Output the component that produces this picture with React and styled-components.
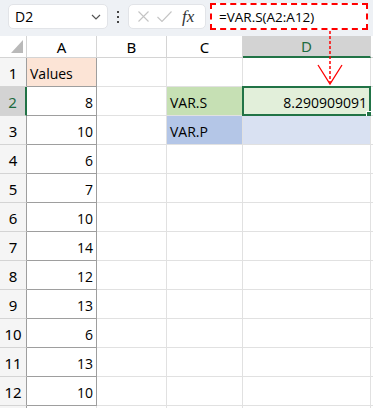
import styled, { createGlobalStyle } from "styled-components";

const GlobalStyle = createGlobalStyle`
  html, body {
    margin: 0;
    padding: 0;
    background: #ffffff;
    overflow: hidden;
  }
`;

const Page = styled.div`
  position: relative;
  width: 373px;
  height: 408px;
  overflow: hidden;
  font-family: "Open Sans", "Noto Sans", sans-serif;
  color: #000000;
`;

const FormulaBar = styled.div`
  display: flex;
  align-items: center;
  height: 36px;
  padding: 0 5px 3px 8px;
  box-sizing: border-box;
  background: #eef1f5;
`;

const NameBox = styled.div`
  display: flex;
  align-items: center;
  justify-content: space-between;
  width: 100px;
  height: 25px;
  box-sizing: border-box;
  padding: 0 6px 0 6px;
  background: #ffffff;
  border: 1px solid #e2e4e8;
  border-radius: 5px;
  font-size: 14px;
`;

const Dots = styled.div`
  display: flex;
  flex-direction: column;
  gap: 3px;
  margin: 0 9px 0 9px;
  span {
    width: 2px;
    height: 2px;
    background: #444444;
  }
`;

const FxBox = styled.div`
  display: flex;
  align-items: center;
  gap: 8px;
  width: 78px;
  height: 25px;
  box-sizing: border-box;
  padding: 0 6px 0 9px;
  background: #ffffff;
  border: 1px solid #e2e4e8;
  border-radius: 5px;
`;

const Fx = styled.span`
  font-family: "Liberation Serif", serif;
  font-style: italic;
  font-size: 17px;
  color: #333333;
  margin-left: 2px;
`;

const FormulaInput = styled.div`
  flex: 1;
  height: 27px;
  margin-left: 4px;
  box-sizing: border-box;
  padding-left: 7px;
  display: flex;
  align-items: center;
  background: #ffffff;
  border: 2px dashed #ff0000;
  font-size: 13.5px;
`;

const Sheet = styled.div`
  display: grid;
  grid-template-columns: 27px 70px 70px 76px 128px 1fr;
  grid-template-rows: 22px repeat(12, 29px) 2px;
  background: #ffffff;
`;

const Corner = styled.div`
  position: relative;
  border-right: 1px solid #d4d4d4;
  border-bottom: 1px solid #d4d4d4;
  background: #ffffff;
  &::after {
    content: "";
    position: absolute;
    right: 3px;
    bottom: 4px;
    width: 12px;
    height: 13px;
    background: #b9b9b9;
    clip-path: polygon(100% 0, 100% 100%, 0 100%);
  }
`;

const ColHeader = styled.div`
  display: flex;
  align-items: center;
  justify-content: center;
  font-family: "Noto Sans", sans-serif;
  font-size: 15px;
  box-sizing: border-box;
  background: ${(p) => (p.$active ? "#d3d3d3" : "#ffffff")};
  color: ${(p) => (p.$active ? "#1e6b40" : "#000000")};
  border-right: 1px solid #d4d4d4;
  border-bottom: ${(p) => (p.$active ? "2px solid #217346" : "1px solid #d4d4d4")};
`;

const RowHeader = styled.div`
  display: flex;
  align-items: flex-end;
  justify-content: center;
  padding-bottom: 3px;
  box-sizing: border-box;
  overflow: hidden;
  font-family: "Noto Sans", sans-serif;
  font-size: 15px;
  background: ${(p) => (p.$active ? "#d3d3d3" : "#f5f5f5")};
  color: ${(p) => (p.$active ? "#1e6b40" : "#000000")};
  border-bottom: 1px solid #d4d4d4;
  border-right: ${(p) => (p.$active ? "2px solid #217346" : "1px solid #9e9e9e")};
`;

const Cell = styled.div`
  position: relative;
  display: flex;
  align-items: flex-end;
  justify-content: ${(p) => (p.$num ? "flex-end" : "flex-start")};
  padding: 0 3px 3px 3px;
  box-sizing: border-box;
  font-size: 14px;
  white-space: nowrap;
  background: ${(p) => p.$bg || "#ffffff"};
  border-right: 1px solid ${(p) => (p.$boxed ? "#9e9e9e" : "#e1e1e1")};
  border-bottom: 1px solid ${(p) => (p.$boxed ? "#9e9e9e" : "#e1e1e1")};
  ${(p) =>
    p.$selected &&
    `
    &::before {
      content: "";
      position: absolute;
      left: -1px;
      top: -1px;
      right: -1px;
      bottom: -1px;
      border: 2px solid #217346;
      pointer-events: none;
    }
    &::after {
      content: "";
      position: absolute;
      right: -4px;
      bottom: -4px;
      width: 6px;
      height: 6px;
      background: #217346;
      border: 1px solid #ffffff;
    }
  `}
`;

const Arrow = styled.svg`
  position: absolute;
  left: 0;
  top: 0;
  pointer-events: none;
`;

const values = [8, 10, 6, 7, 10, 14, 12, 13, 6, 13, 10];
const cols = ["A", "B", "C", "D", ""];

const extra = {
  2: { C: { text: "VAR.S", bg: "#c6e0b4" }, D: { text: "8.290909091", bg: "#e2efda", num: true, selected: true } },
  3: { C: { text: "VAR.P", bg: "#b4c6e7" }, D: { text: "", bg: "#d9e1f2" } },
};

const App = () => {
  const rows = [];
  for (let r = 1; r <= 13; r++) {
    const filler = r > 12;
    rows.push(
      <RowHeader key={`h${r}`} $active={r === 2}>
        {filler ? "" : r}
      </RowHeader>
    );
    rows.push(
      <Cell
        key={`a${r}`}
        $boxed={!filler}
        $num={r > 1}
        $bg={r === 1 ? "#fce4d6" : undefined}
      >
        {r === 1 ? "Values" : filler ? "" : values[r - 2]}
      </Cell>
    );
    ["B", "C", "D", ""].forEach((c) => {
      const e = (extra[r] && extra[r][c]) || {};
      rows.push(
        <Cell key={`${c}${r}`} $bg={e.bg} $num={e.num} $selected={e.selected}>
          {e.text}
        </Cell>
      );
    });
  }

  return (
    <Page>
      <GlobalStyle />
      <FormulaBar>
        <NameBox>
          <span>D2</span>
          <svg width="10" height="6" viewBox="0 0 10 6">
            <path d="M1 1 L5 5 L9 1" fill="none" stroke="#555" strokeWidth="1.2" />
          </svg>
        </NameBox>
        <Dots>
          <span />
          <span />
          <span />
        </Dots>
        <FxBox>
          <svg width="11" height="11" viewBox="0 0 11 11">
            <path d="M0.5 0.5 L10.5 10.5 M10.5 0.5 L0.5 10.5" stroke="#c4c4c4" strokeWidth="1.1" />
          </svg>
          <svg width="15" height="11" viewBox="0 0 15 11">
            <path d="M0.5 6 L5 10.5 L14.5 0.5" fill="none" stroke="#c4c4c4" strokeWidth="1.1" />
          </svg>
          <Fx>fx</Fx>
        </FxBox>
        <FormulaInput>=VAR.S(A2:A12)</FormulaInput>
      </FormulaBar>
      <Sheet>
        <Corner />
        {cols.map((c) => (
          <ColHeader key={c || "x"} $active={c === "D"}>
            {c}
          </ColHeader>
        ))}
        {rows}
      </Sheet>
      <Arrow width="373" height="408">
        <line x1="330" y1="31" x2="330" y2="83" stroke="#ff0000" strokeWidth="1.5" strokeDasharray="3 2" />
        <path d="M318 65 L330 84 L342 65" fill="none" stroke="#ff0000" strokeWidth="1.3" />
      </Arrow>
    </Page>
  );
};

export default App;
